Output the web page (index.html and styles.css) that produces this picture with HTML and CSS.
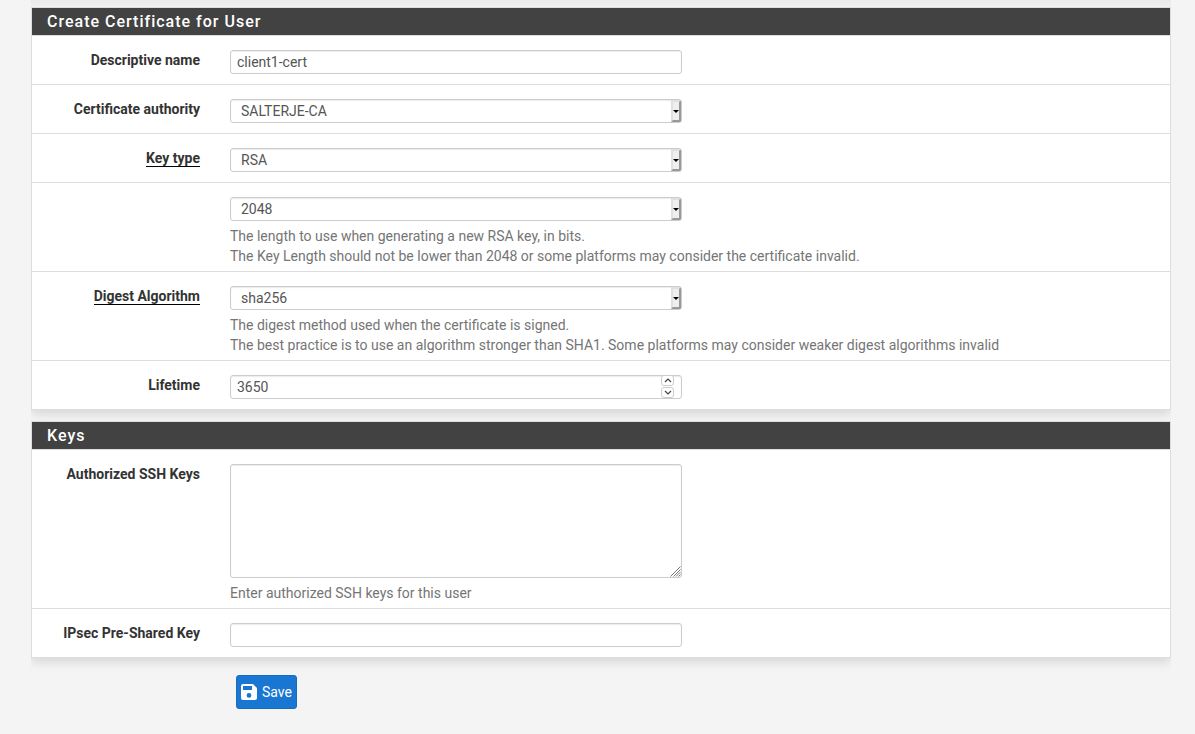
FILE: index.html
```html
<!DOCTYPE html>
<html lang="en">
<head>
<meta charset="utf-8">
<title>User Manager</title>
<link rel="stylesheet" href="styles.css">
</head>
<body>
<form class="page">
  <div class="panel-edge"></div>
  <section class="panel">
    <h2 class="panel-title">Create Certificate for User</h2>
    <div class="row">
      <label class="label" for="name">Descriptive name</label>
      <div class="field"><div class="box"><input class="control" id="name" type="text" value="client1-cert"></div></div>
    </div>
    <div class="row">
      <label class="label" for="ca">Certificate authority</label>
      <div class="field"><div class="box select"><select class="control" id="ca"><option>SALTERJE-CA</option></select></div></div>
    </div>
    <div class="row">
      <label class="label" for="keytype"><span class="required">Key type</span></label>
      <div class="field"><div class="box select"><select class="control" id="keytype"><option>RSA</option><option>ECDSA</option></select></div></div>
    </div>
    <div class="row">
      <div class="label"></div>
      <div class="field">
        <div class="box select"><select class="control" id="keylen" aria-labelledby="keylen-help"><option>2048</option><option>4096</option></select></div>
        <p class="help" id="keylen-help">The length to use when generating a new RSA key, in bits.<br>The Key Length should not be lower than 2048 or some platforms may consider the certificate invalid.</p>
      </div>
    </div>
    <div class="row">
      <label class="label" for="digest"><span class="required">Digest Algorithm</span></label>
      <div class="field">
        <div class="box select"><select class="control" id="digest"><option>sha256</option><option>sha512</option></select></div>
        <p class="help">The digest method used when the certificate is signed.<br>The best practice is to use an algorithm stronger than SHA1. Some platforms may consider weaker digest algorithms invalid</p>
      </div>
    </div>
    <div class="row">
      <label class="label" for="lifetime">Lifetime</label>
      <div class="field"><div class="box"><input class="control" id="lifetime" type="number" value="3650">
        <div class="spinner">
          <button class="spin" type="button" aria-label="Increase"><svg width="8" height="5" viewBox="0 0 8 5"><path d="M1 4l3-3 3 3" fill="none" stroke="#444" stroke-width="1.2"/></svg></button>
          <button class="spin" type="button" aria-label="Decrease"><svg width="8" height="5" viewBox="0 0 8 5"><path d="M1 1l3 3 3-3" fill="none" stroke="#444" stroke-width="1.2"/></svg></button>
        </div>
      </div></div>
    </div>
  </section>
  <section class="panel">
    <h2 class="panel-title">Keys</h2>
    <div class="row">
      <label class="label" for="ssh">Authorized SSH Keys</label>
      <div class="field">
        <div class="box"><textarea class="control area" id="ssh"></textarea>
          <svg class="grip" width="11" height="11" viewBox="0 0 11 11"><path d="M0.5 10.5L10.5 0.5M3.5 10.5L10.5 3.5M6 10.5L10.5 6M8.5 10.5L10.5 8.5" fill="none" stroke="#777"/></svg>
        </div>
        <p class="help">Enter authorized SSH keys for this user</p>
      </div>
    </div>
    <div class="row">
      <label class="label" for="psk">IPsec Pre-Shared Key</label>
      <div class="field"><div class="box"><input class="control" id="psk" type="text"></div></div>
    </div>
  </section>
  <div class="actions">
    <button class="save" type="submit"><svg width="16" height="16" viewBox="0 0 16 16"><path fill="#fff" fill-rule="evenodd" d="M2 0h10l4 4v10a2 2 0 0 1-2 2H2a2 2 0 0 1-2-2V2a2 2 0 0 1 2-2zM2 2v4h9V2zM8 9a2.4 2.4 0 1 0 0 4.8A2.4 2.4 0 0 0 8 9z"/></svg>Save</button>
  </div>
</form>
</body>
</html>
```
FILE: styles.css
```css
*,
*::before,
*::after {
  box-sizing: border-box;
}

body {
  margin: 0;
  background: #f4f4f4;
  color: #333;
  font: 14px/20px Roboto, sans-serif;
}

.page {
  padding: 0 24px 24px 31px;
}

.panel-edge {
  height: 7px;
  background: linear-gradient(#eaeaea, #f1f1f1);
}

.panel {
  margin-bottom: 11px;
  border: 1px solid #ddd;
  background: #fff;
  box-shadow: 0 4px 10px rgba(0, 0, 0, 0.12);
  clip-path: inset(0 0 -16px 0);
}

.panel-title {
  margin: 0;
  padding: 4px 15px 3px;
  background: #424242;
  color: #fff;
  font-size: 16px;
  font-weight: 500;
  line-height: 20px;
  letter-spacing: 1px;
}

.row {
  display: flex;
  gap: 30px;
  padding: 14px 15px 10px 0;
  border-top: 1px solid #ddd;
}

.row:has(.help) {
  padding-bottom: 5px;
}

.label {
  flex: 0 0 168px;
  font-weight: 700;
  text-align: right;
}

.required {
  border-bottom: 1px solid #000;
}

.field {
  flex: 1;
  min-width: 0;
}

.box {
  position: relative;
  max-width: 452px;
}

.control {
  display: block;
  width: 100%;
  height: 24px;
  margin: 0;
  padding: 0 6px;
  border: 1px solid #ccc;
  border-radius: 3px;
  background: #fff;
  box-shadow: inset 0 1px 1px rgba(0, 0, 0, 0.08);
  color: #555;
  font: inherit;
  appearance: none;
}

select.control {
  padding: 0 10px;
}

input[type="number"] {
  appearance: textfield;
}

input[type="number"]::-webkit-inner-spin-button {
  display: none;
}

.area {
  height: 114px;
  resize: none;
}

.select::before {
  content: "";
  position: absolute;
  top: 1px;
  right: 1px;
  width: 10px;
  height: 22px;
  border: 2px solid;
  border-color: #e0e0e0 #999 #999 #e0e0e0;
  border-radius: 0 2px 2px 0;
  background: #efefef;
  pointer-events: none;
}

.select::after {
  content: "";
  position: absolute;
  top: 11px;
  right: 3px;
  border: 3px solid transparent;
  border-top-color: #000;
  border-bottom: 0;
  pointer-events: none;
}

.spinner {
  position: absolute;
  top: 0;
  right: 8px;
  display: grid;
  gap: 1px;
}

.spin {
  display: grid;
  place-items: center;
  width: 13px;
  height: 11px;
  padding: 0;
  border: 1px solid #ccc;
  border-radius: 3px;
  background: #fff;
}

.grip {
  position: absolute;
  right: 1px;
  bottom: 1px;
  pointer-events: none;
}

.help {
  margin: 5px 0 0;
  color: #757575;
}

.actions {
  padding: 6px 0 0 205px;
}

.save {
  display: flex;
  align-items: center;
  gap: 5px;
  height: 34px;
  padding: 0 4px;
  border: 1px solid #1b6bb8;
  border-radius: 3px;
  background: #1976d2;
  color: #fff;
  font: inherit;
}
```
